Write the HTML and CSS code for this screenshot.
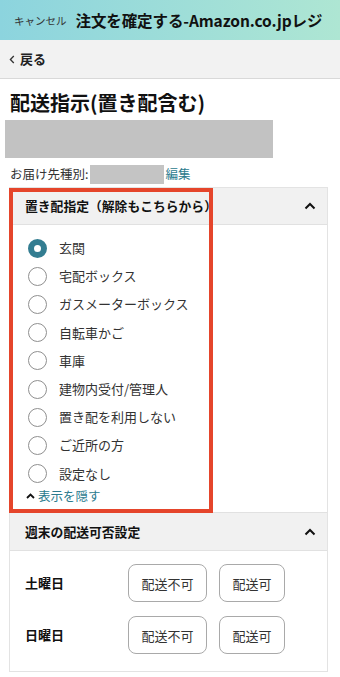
FILE: index.html
```html
<!DOCTYPE html>
<html lang="ja">
<head>
<meta charset="utf-8">
<link rel="stylesheet" href="styles.css">
</head>
<body>
<header class="topbar">
  <span class="cancel">キャンセル</span>
  <span class="apptitle">注文を確定する-Amazon.co.jpレジ</span>
</header>
<nav class="backbar">
  <svg class="back-chev" width="6" height="9" viewBox="0 0 6 9"><path d="M4.8 1 L1.4 4.5 L4.8 8" fill="none" stroke="#333" stroke-width="1.3"/></svg>
  <span class="back-text">戻る</span>
</nav>
<main class="main">
  <h1 class="page-title">配送指示(置き配含む)</h1>
  <div class="redacted-block"></div>
  <div class="info-row">
    <span>お届け先種別:</span><span class="redacted-inline"></span><a class="link">編集</a>
  </div>
</main>
<section class="card">
  <div class="acc-head">
    <span>置き配指定（解除もこちらから）</span>
    <svg class="chev" width="12" height="8" viewBox="0 0 12 8"><path d="M1.5 6.5 L6 2 L10.5 6.5" fill="none" stroke="#111" stroke-width="2"/></svg>
  </div>
  <div class="acc-body options">
    <label class="opt"><span class="radio checked"></span>玄関</label>
    <label class="opt"><span class="radio"></span>宅配ボックス</label>
    <label class="opt"><span class="radio"></span>ガスメーターボックス</label>
    <label class="opt"><span class="radio"></span>自転車かご</label>
    <label class="opt"><span class="radio"></span>車庫</label>
    <label class="opt"><span class="radio"></span>建物内受付/管理人</label>
    <label class="opt"><span class="radio"></span>置き配を利用しない</label>
    <label class="opt"><span class="radio"></span>ご近所の方</label>
    <label class="opt"><span class="radio"></span>設定なし</label>
    <div class="hide-link">
      <svg width="9" height="6" viewBox="0 0 9 6"><path d="M1 5 L4.5 1.5 L8 5" fill="none" stroke="#111" stroke-width="1.8"/></svg>
      <a class="link">表示を隠す</a>
    </div>
  </div>
  <div class="acc-head second">
    <span>週末の配送可否設定</span>
    <svg class="chev" width="12" height="8" viewBox="0 0 12 8"><path d="M1.5 6.5 L6 2 L10.5 6.5" fill="none" stroke="#111" stroke-width="2"/></svg>
  </div>
  <div class="acc-body weekend">
    <div class="day-row">
      <span class="day">土曜日</span>
      <button class="btn wide">配送不可</button>
      <button class="btn">配送可</button>
    </div>
    <div class="day-row">
      <span class="day">日曜日</span>
      <button class="btn wide">配送不可</button>
      <button class="btn">配送可</button>
    </div>
  </div>
  <div class="highlight"></div>
</section>
</body>
</html>
```
FILE: styles.css
```css
* { box-sizing: border-box; }
html, body { margin: 0; padding: 0; }
body {
  width: 340px;
  height: 677px;
  overflow: hidden;
  background: #fff;
  color: #333;
  font-family: "Noto Sans CJK JP", "Noto Sans", sans-serif;
}
.topbar {
  height: 40px;
  display: flex;
  align-items: center;
  padding-left: 14px;
  background: linear-gradient(to right, #8cd4de, #aee6d3);
}
.cancel {
  font-size: 10.5px;
  color: #333;
  margin-right: 9px;
  line-height: 14px;
  margin-top: 2px;
}
.apptitle {
  font-size: 15.5px;
  font-weight: 700;
  color: #111;
  line-height: 20px;
  letter-spacing: -0.1px;
}
.backbar {
  height: 39px;
  display: flex;
  align-items: center;
  padding-left: 9px;
  background: #f2f2f2;
  border-bottom: 1px solid #d9d9d9;
}
.back-chev { margin-right: 5px; margin-top: 1px; }
.back-text {
  font-size: 13px;
  font-weight: 700;
  color: #222;
  line-height: 18px;
}
.main { padding: 0 10px; }
.page-title {
  margin: 10px 0 0;
  font-size: 20px;
  font-weight: 700;
  line-height: 28px;
  color: #111;
}
.redacted-block {
  margin: 3px 0 0 -5px;
  width: 268px;
  height: 38px;
  background: #c2c2c2;
}
.info-row {
  margin-top: 4px;
  height: 24px;
  display: flex;
  align-items: center;
  font-size: 12.5px;
  line-height: 16px;
  color: #333;
}
.redacted-inline {
  display: inline-block;
  width: 74px;
  height: 19px;
  background: #c4c4c4;
  margin-left: 2px;
  margin-right: 1px;
}
.link { color: #2b7b8e; text-decoration: none; }
.card {
  position: relative;
  margin: 1px 12px 0 9px;
  border: 1px solid #e3e3e3;
  background: #fff;
}
.acc-head {
  height: 37px;
  display: flex;
  align-items: center;
  justify-content: space-between;
  padding: 0 11px 0 15px;
  background: #f1f1f1;
  border-bottom: 1px solid #e1e1e1;
  font-size: 12.8px;
  font-weight: 700;
  color: #111;
  line-height: 18px;
}
.acc-head.second {
  border-top: 1px solid #e1e1e1;
  height: 39px;
}
.chev { display: block; }
.options {
  padding: 9px 0 0 18px;
  height: 287px;
}
.opt {
  height: 28.2px;
  display: flex;
  align-items: center;
  font-size: 13px;
  line-height: 18px;
  color: #333;
}
.radio {
  width: 19px;
  height: 19px;
  border-radius: 50%;
  border: 1px solid #8f8f8f;
  margin-right: 12px;
  flex: none;
  background: #fff;
}
.radio.checked {
  border: 6px solid #337d91;
  background: #fff;
}
.hide-link {
  display: flex;
  align-items: center;
  height: 16px;
  margin-left: -2px;
  font-size: 12.5px;
  line-height: 16px;
}
.hide-link svg { margin-right: 3px; }
.weekend {
  padding: 13px 0 17px 15px;
  display: flex;
  flex-direction: column;
  gap: 14px;
}
.day-row {
  display: flex;
  align-items: center;
  height: 38px;
}
.day {
  width: 103px;
  font-size: 13px;
  font-weight: 700;
  color: #111;
  line-height: 18px;
}
.btn {
  height: 38px;
  width: 66px;
  border: 1px solid #a9a9a9;
  border-radius: 8px;
  background: #fff;
  font-family: inherit;
  font-size: 13px;
  color: #333;
  padding: 0;
  margin-right: 12px;
}
.btn.wide { width: 79px; }
.highlight {
  position: absolute;
  left: -1px;
  top: 0;
  width: 204px;
  height: 325px;
  border: 4px solid #e5452b;
  pointer-events: none;
}
```
